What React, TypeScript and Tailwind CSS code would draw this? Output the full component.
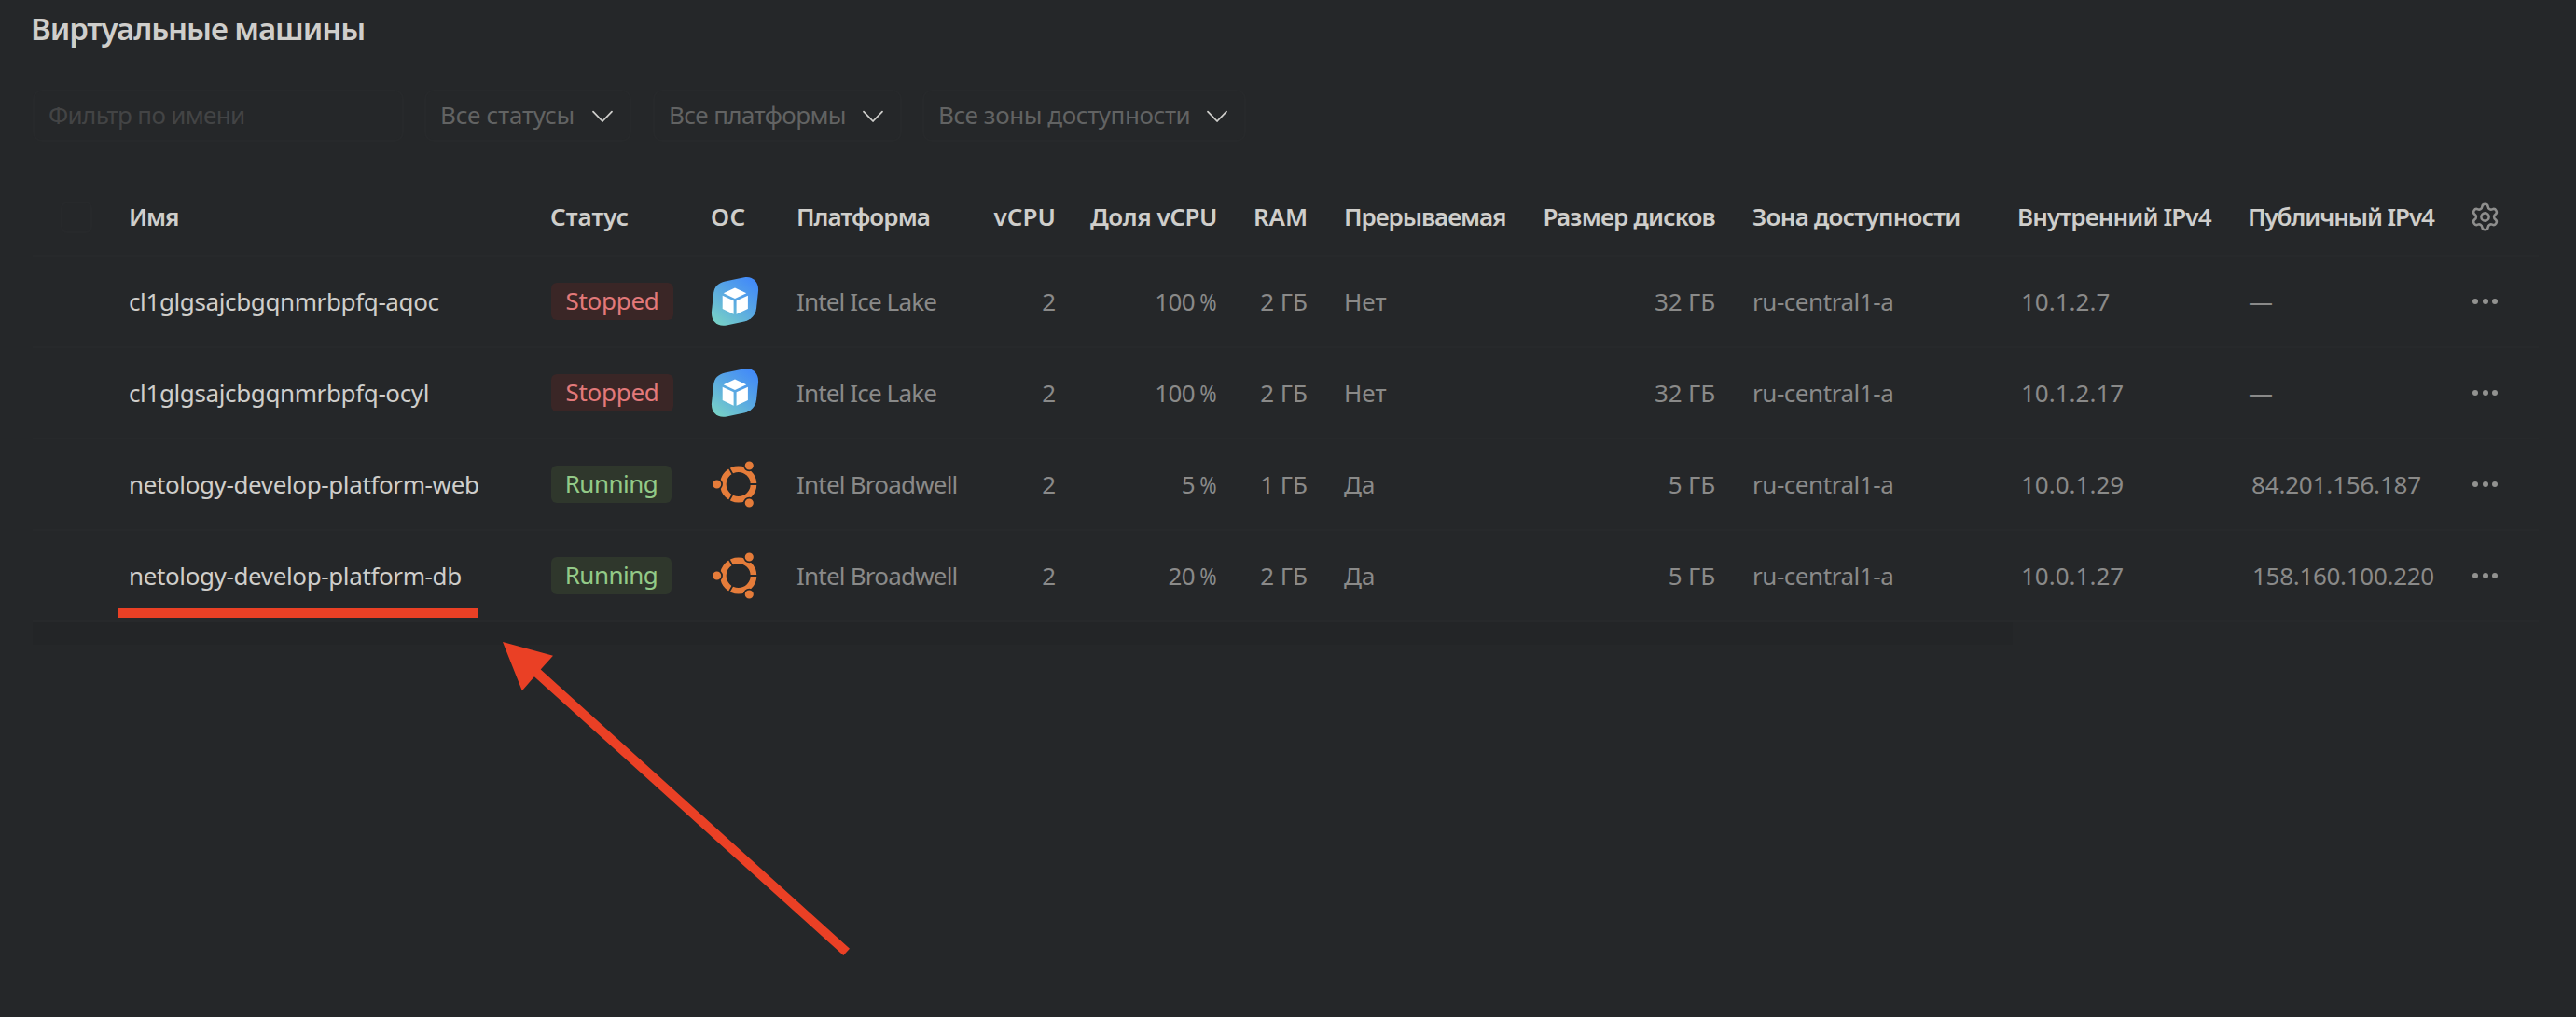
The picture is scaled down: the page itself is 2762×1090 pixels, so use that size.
import type { ReactNode } from "react";
import { Settings } from "lucide-react";

function Chevron() {
  return (
    <svg width="24" height="14" viewBox="0 0 24 14" fill="none" stroke="#cfcecb" strokeWidth="1.800" strokeLinecap="round" strokeLinejoin="round">
      <path d="M2 1.6 12 12 22 1.6" />
    </svg>
  );
}

function IceIcon() {
  return (
    <svg className="-ml-[1px]" width="52" height="54" viewBox="0 0 52 54">
      <defs>
        <linearGradient id="ice" x1="8" y1="50" x2="44" y2="4" gradientUnits="userSpaceOnUse">
          <stop offset="0" stopColor="#76cfc8" />
          <stop offset="0.5" stopColor="#5aa9e2" />
          <stop offset="1" stopColor="#438bf8" />
        </linearGradient>
      </defs>
      <path
        fill="url(#ice)"
        d="M3.2 17.5 1 38C.2 48 7 54.500 17 52.500L36 48.500C43.500 46.500 48 42 49 34.500L51 16C51.800 6 45 -.5 36 1.200L15.500 5.500C8 7.500 4.200 11 3.200 17.500Z"
      />
      <path fill="#fff" d="M26 12.600 38.300 18.300 26 24 13.700 18.300ZM12.700 20.800 24.600 26.300V40.700L12.700 35ZM39.900 20.800 27.600 26.300V40.700L39.900 35Z" />
    </svg>
  );
}

function UbuntuIcon() {
  return (
    <svg width="52" height="52" viewBox="0 0 52 52" fill="none">
      <circle cx="28.700" cy="26" r="16.300" stroke="#e57c3a" strokeWidth="6.600" />
      <g stroke="#252729" strokeWidth="1.800">
        <path d="M40 26h10M23.100 16.200l-5-8.700M23.100 35.800l-5 8.700" />
      </g>
      <g fill="#e57c3a" stroke="#252729" strokeWidth="1.700">
        <circle cx="5.700" cy="26" r="5.400" />
        <circle cx="40.300" cy="6" r="5.400" />
        <circle cx="40.300" cy="46" r="5.400" />
      </g>
    </svg>
  );
}

function Dots() {
  return (
    <span className="flex gap-[4.500px]">
      <i className="size-[6px] rounded-full bg-[#929290]" />
      <i className="size-[6px] rounded-full bg-[#929290]" />
      <i className="size-[6px] rounded-full bg-[#929290]" />
    </span>
  );
}

function Select({ label, box }: { label: string; box: string }) {
  return (
    <div className={`flex h-[56px] items-center justify-between rounded-[10px] border-2 border-[#27292b] pr-[18px] pl-[15px] text-[#626363] ${box}`}>
      <span className="pb-[2px] whitespace-nowrap">{label}</span>
      <span className="-mr-[0.5px] pt-[2px] tracking-normal"><Chevron /></span>
    </div>
  );
}

function Checkbox() {
  return <span className="ml-[30px] size-[34px] rounded-[7px] border-2 border-[#27292b]" />;
}

const columns =
  "grid grid-cols-[103px_453px_172px_91px_186px_92px_173px_97px_238px_199px_324px_248px_232px_78px] items-center border-b-2 border-[#27292b] whitespace-nowrap";

type Vm = {
  name: ReactNode;
  running: boolean;
  platform: ReactNode;
  share: ReactNode;
  ram: string;
  preemptible: string;
  disk: string;
  internal: ReactNode;
  external: ReactNode;
};

const iceLake = <span className="tracking-[-0.850px]">Intel Ice Lake</span>;
const broadwell = <span className="tracking-[-0.790px]">Intel Broadwell</span>;

const vms: Vm[] = [
  {
    name: "cl1glgsajcbgqnmrbpfq-aqoc", running: false, platform: iceLake, share: "100", ram: "2 ГБ", preemptible: "Нет", disk: "32 ГБ",
    internal: "10.1.2.7", external: <span>—</span>,
  },
  {
    name: "cl1glgsajcbgqnmrbpfq-ocyl", running: false, platform: iceLake, share: "100", ram: "2 ГБ", preemptible: "Нет", disk: "32 ГБ",
    internal: "10.1.2.17", external: <span>—</span>,
  },
  {
    name: "netology-develop-platform-web", running: true, platform: broadwell, share: "5", ram: "1 ГБ", preemptible: "Да", disk: "5 ГБ",
    internal: "10.0.1.29", external: <span className="ml-[3px] tracking-[-0.180px]">84.201.156.187</span>,
  },
  {
    name: "netology-develop-platform-db", running: true, platform: broadwell, share: "20", ram: "2 ГБ", preemptible: "Да", disk: "5 ГБ",
    internal: "10.0.1.27", external: <span className="ml-[4px] tracking-[-0.300px]">158.160.100.220</span>,
  },
];

function Status({ running }: { running: boolean }) {
  return running ? (
    <span className="flex h-[40px] w-[129px] items-center justify-center rounded-[6px] bg-[#2f372c] pb-[2px] tracking-[-0.500px] text-[#93ca88]">Running</span>
  ) : (
    <span className="flex h-[40px] w-[131px] items-center justify-center rounded-[6px] bg-[#3a2626] pb-[2px] tracking-[-0.300px] text-[#e2797a]">Stopped</span>
  );
}

export default function App() {
  return (
    <main className="relative flex h-[1090px] w-[2762px] flex-col overflow-hidden bg-[#252729] pl-[35px] font-['Noto_Sans',sans-serif] text-[26px] leading-[36px] text-[#8a8a89]">
      <h1 className="-ml-[2px] h-[96px] pt-[11px] text-[33px] leading-[40px] font-semibold tracking-[-1.080px] text-[#cfcecb]">Виртуальные машины</h1>

      <div className="flex h-[96px] items-start">
        <div className="flex h-[56px] w-[398px] items-center rounded-[10px] border-2 border-[#27292b] pb-[2px] pl-[15px] tracking-[-0.660px] text-[#434445]">
          Фильтр по имени
        </div>
        <Select label="Все статусы" box="ml-[22px] w-[222px] tracking-[-0.250px]" />
        <Select label="Все платформы" box="ml-[23px] w-[267px] tracking-[-0.600px]" />
        <Select label="Все зоны доступности" box="ml-[22px] w-[347px] tracking-[-0.420px]" />
      </div>

      <section className="w-[2687px]">
        <div className={`h-[83px] font-semibold text-[#cfcecb] ${columns}`}>
          <Checkbox />
          <span className="pb-[2px] tracking-[-1.200px]">Имя</span>
          <span className="-ml-[1px] pb-[2px] tracking-[0.050px]">Статус</span>
          <span className="-ml-[1px] pb-[2px] tracking-[0.500px]">ОС</span>
          <span className="pb-[2px] tracking-[-0.930px]">Платформа</span>
          <span className="pb-[2px] text-right tracking-[0.100px]">vCPU</span>
          <span className="pb-[2px] text-right tracking-[-0.440px]">Доля vCPU</span>
          <span className="pb-[2px] text-right tracking-[-0.120px]">RAM</span>
          <span className="pb-[2px] pl-[39px] tracking-[-1.040px]">Прерываемая</span>
          <span className="pb-[2px] text-right tracking-[-0.800px]">Размер дисков</span>
          <span className="pb-[2px] pl-[40px] tracking-[-0.720px]">Зона доступности</span>
          <span className="pb-[2px] tracking-[-0.860px]">Внутренний IPv4</span>
          <span className="-ml-[1px] pb-[2px] tracking-[-1.080px]">Публичный IPv4</span>
          <Settings className="ml-[4.500px] text-[#8e8e8d]" size={33} strokeWidth={1.85} />
        </div>

        {vms.map((vm, i) => (
          <div key={i} className={`h-[98px] ${columns}`}>
            <span />
            <span className="pb-[1px] tracking-[-0.380px] text-[#cfcecb]">{vm.name}</span>
            <Status running={vm.running} />
            {vm.running ? <UbuntuIcon /> : <IceIcon />}
            <span className="pb-[1px]">{vm.platform}</span>
            <span className="pb-[1px] text-right">2</span>
            <span className="flex justify-end gap-[5px] pr-[1px] pb-[1px] tracking-[-0.600px]">
              <span>{vm.share}</span>
              <span className="-ml-[3px] origin-right scale-x-[0.850]">%</span>
            </span>
            <span className="pb-[1px] text-right">{vm.ram}</span>
            <span className="pb-[1px] pl-[39px]">{vm.preemptible}</span>
            <span className="pb-[1px] text-right tracking-[-0.140px]">{vm.disk}</span>
            <span className="pb-[1px] pl-[40px] tracking-[-0.450px]">ru-central1-a</span>
            <span className="pb-[1px] pl-[4px]">{vm.internal}</span>
            <span className="pb-[1px]">{vm.external}</span>
            <span className="pl-[8px]"><Dots /></span>
          </div>
        ))}
        <div className="h-[24px] w-[2123px] bg-[#232527]" />
      </section>

      <svg className="absolute top-[640px] left-[120px]" width="800" height="400" viewBox="120 640 800 400" fill="#ea4025">
        <path d="M127 652H512V662H127Z" />
        <path d="M539 688 593 702.700 579.700 717.500 911 1016.700 904.300 1024 572.900 725.200 559.800 740.200Z" />
      </svg>
    </main>
  );
}
